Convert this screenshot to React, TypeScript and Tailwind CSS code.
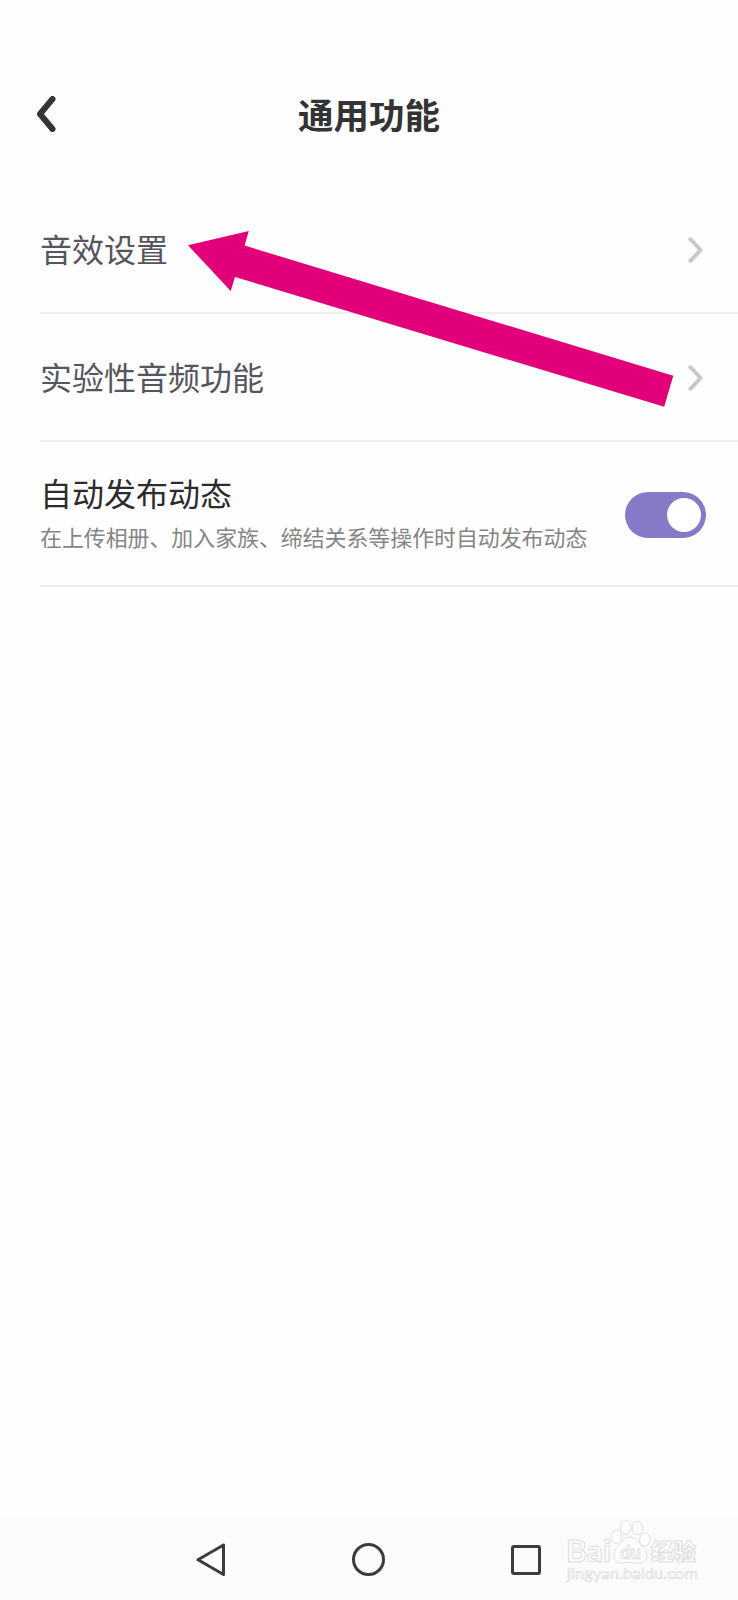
import React, { useState } from 'react';

const rows = [
  { id: 'effects', label: '音效设置', className: 'h-[130px] pt-[3px]' },
  { id: 'lab', label: '实验性音频功能', className: 'h-[128px] pt-[1px]' },
];

const ChevronRight = () => (
  <svg className="w-[15px] h-[26px] shrink-0" viewBox="0 0 15 26" fill="none">
    <path d="M2.4 2.2 12.6 13 2.4 23.8" stroke="#c8c8c8" strokeWidth="3.9" strokeLinecap="round" strokeLinejoin="round" />
  </svg>
);

const Header = () => (
  <header className="grid grid-cols-[1fr_auto_1fr] items-center h-[104px] mt-[64px] px-[36px]">
    <button aria-label="返回" className="justify-self-start -mt-[5px]">
      <svg className="w-[20px] h-[36px]" viewBox="0 0 20 36" fill="none">
        <path d="M16.500 3 4 18 16.500 33" stroke="#353535" strokeWidth="6" strokeLinecap="round" strokeLinejoin="round" />
      </svg>
    </button>
    <h1 className="text-[35.5px] leading-[52px] -mt-[4px] font-bold text-[#333333]">通用功能</h1>
  </header>
);

const Watermark = () => (
  <svg
    className="absolute left-[560px] top-0 w-[150px] h-[81px] font-['Lato','Noto_Sans_CJK_SC',sans-serif]"
    viewBox="0 0 150 81"
    fill="#fefefe"
    stroke="#dedede"
    strokeWidth="1"
  >
    <text x="6" y="43" fontSize="30" fontWeight="700" textLength="45" lengthAdjust="spacingAndGlyphs">Bai</text>
    <ellipse cx="56.5" cy="18" rx="5.300" ry="6.800" />
    <ellipse cx="65.800" cy="8.500" rx="5.3" ry="7" />
    <ellipse cx="77.3" cy="9" rx="5.200" ry="6.8" />
    <ellipse cx="84.800" cy="20.500" rx="5.200" ry="6.600" />
    <path d="M70 18c-6 0-7.500 5-11 8.500-3.500 3-5.500 6-5 10.500.6 5 4 7.500 8.500 7 5-.7 10-.7 15 0 5.500.8 9-2.500 9.500-7 .3-4-2-7-5.500-10C78 23.500 76.500 18 70 18Z" />
    <text x="60" y="39.500" fontSize="18" fontWeight="700" textLength="21" lengthAdjust="spacingAndGlyphs">du</text>
    <text x="91" y="41" fontSize="22.500" fontWeight="900" textLength="45" lengthAdjust="spacingAndGlyphs">经验</text>
    <text x="7" y="60" fontSize="16" strokeWidth=".7" textLength="131" lengthAdjust="spacingAndGlyphs">jingyan.baidu.com</text>
  </svg>
);

const NavBar = () => (
  <nav className="relative h-[81px] bg-[#fbfbfb]">
    <div className="flex items-center h-[81px] pl-[196px]">
      <svg className="w-[30px] h-[34px]" viewBox="0 0 30 34" fill="none">
        <path d="M27.500 2v29.500L2 16.800Z" stroke="#3c3c3c" strokeWidth="3" strokeLinejoin="round" />
      </svg>
      <div className="ml-[126px] w-[33px] h-[33px] rounded-full border-3 border-[#3c3c3c]" />
      <div className="ml-[126px] w-[30px] h-[30px] rounded-[3px] border-3 border-[#3c3c3c]" />
    </div>
    <Watermark />
  </nav>
);

export default function App() {
  const [autoPost, setAutoPost] = useState(true);

  return (
    <div className="relative flex flex-col w-[738px] h-[1600px] overflow-hidden bg-[#fefefe] font-['Noto_Sans_CJK_SC',sans-serif]">
      <Header />

      <main className="flex-1 pt-[16px] pl-[40px]">
        {rows.map((row) => (
          <div key={row.id} className={`flex items-center justify-between pr-[35px] border-b-2 border-[#eeeeee] ${row.className}`}>
            <span className="text-[32px] leading-[48px] -mt-[3px] text-[#555560]">{row.label}</span>
            <ChevronRight />
          </div>
        ))}

        <div className="flex items-center justify-between h-[145px] pr-[32px] border-b-2 border-[#f0f0f0]">
          <div>
            <div className="text-[32px] leading-[46px] text-[#2c2c2c]">自动发布动态</div>
            <div className="text-[21.9px] leading-[44px] text-[#858585]">在上传相册、加入家族、缔结关系等操作时自动发布动态</div>
          </div>
          <button
            role="switch"
            aria-checked={autoPost}
            onClick={() => setAutoPost(!autoPost)}
            className={`flex items-center w-[81px] h-[46px] mt-[2px] px-[5px] rounded-full ${autoPost ? 'justify-end bg-[#8579c8]' : 'justify-start bg-[#d4d4d4]'}`}
          >
            <span className="w-[34px] h-[34px] rounded-full bg-white" />
          </button>
        </div>
      </main>

      <NavBar />

      {/* pointer towards the first row */}
      <svg className="absolute left-[180px] top-[220px] w-[500px] h-[200px] pointer-events-none" viewBox="180 220 500 200">
        <path d="M188 245.300 248.800 231 244.600 245.600 673.300 375.800 664.200 406.800 235 277 230.700 291Z" fill="#e2007a" />
      </svg>
    </div>
  );
}
